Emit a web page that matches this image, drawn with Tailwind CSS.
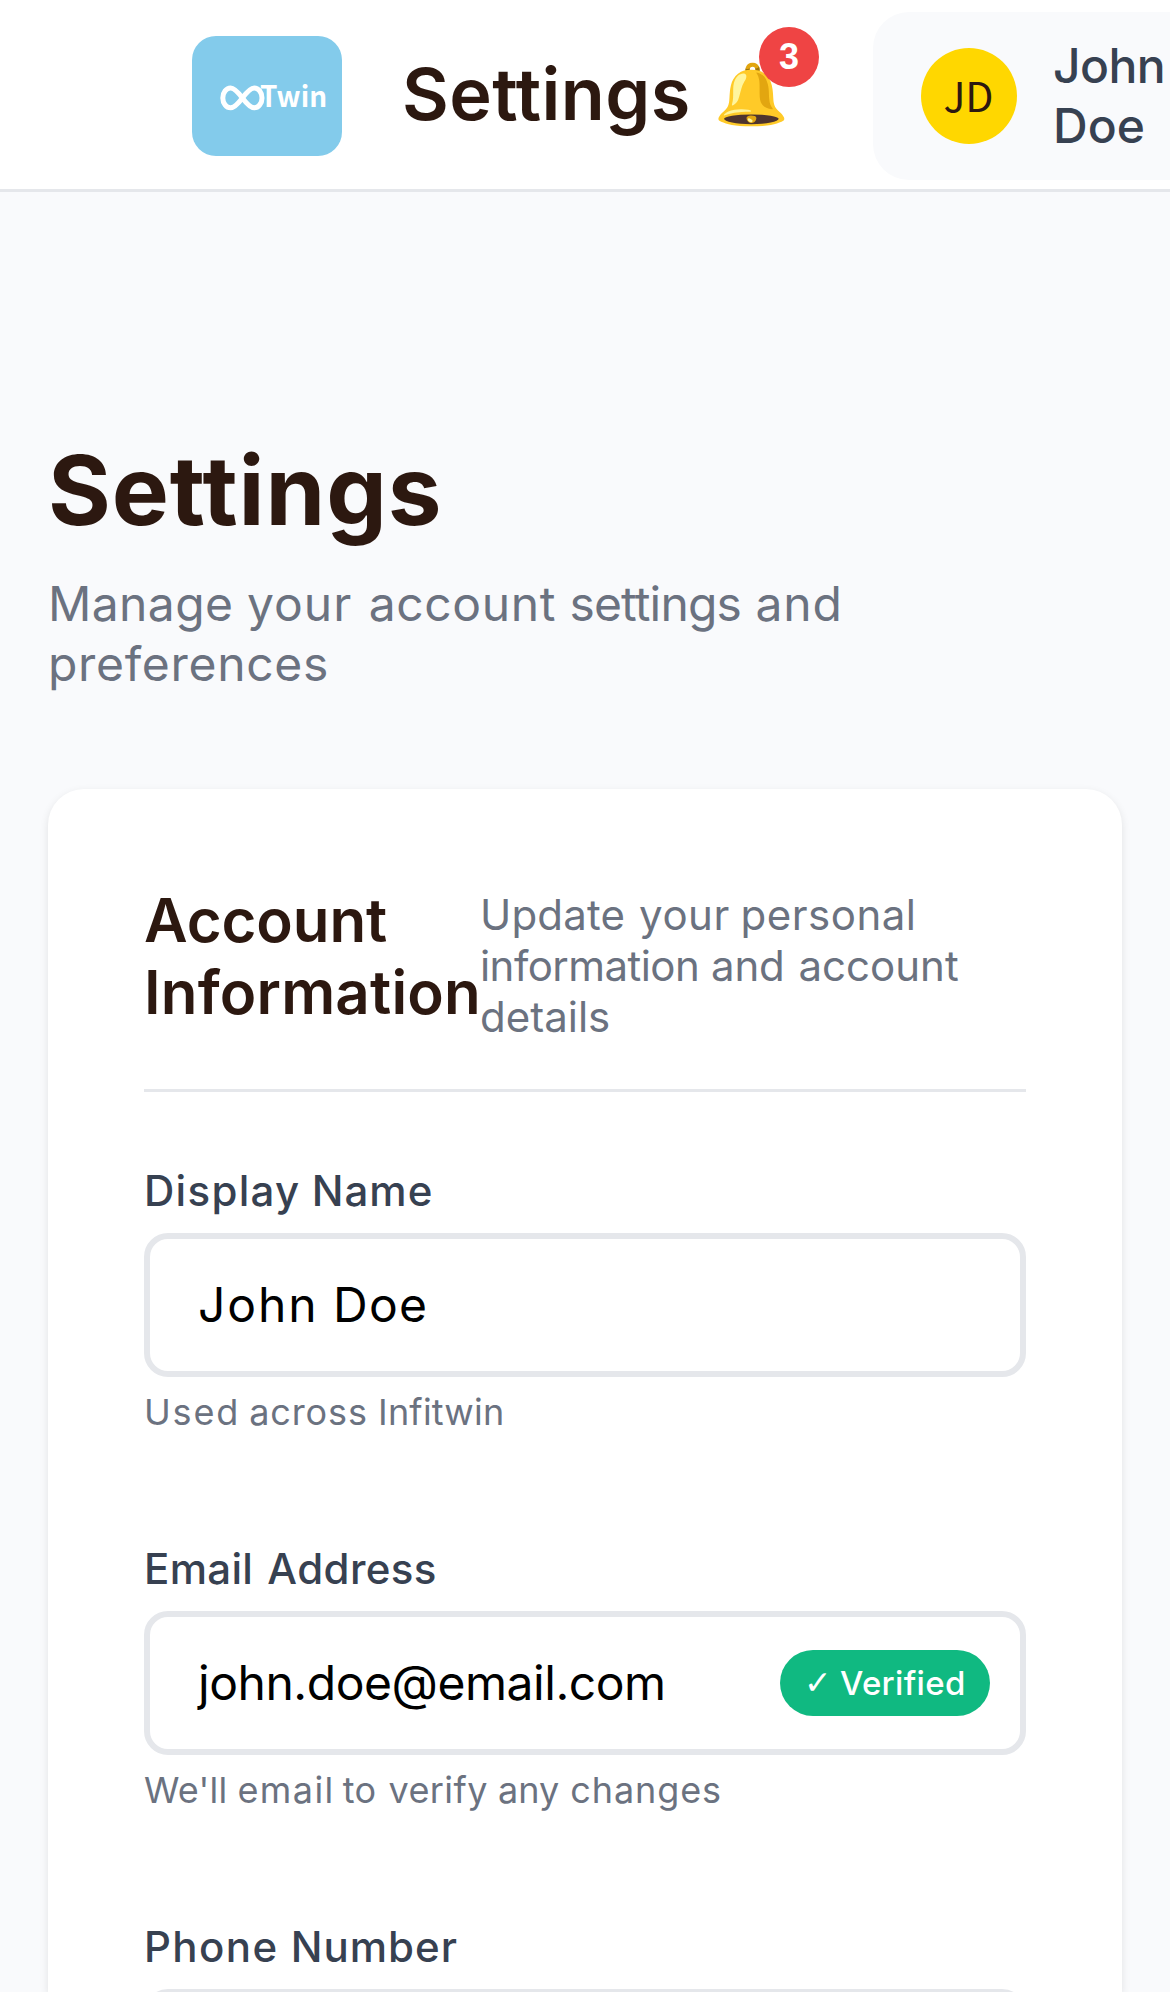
<!DOCTYPE html>
<html lang="en">
<head>
<meta charset="utf-8">
<title>Settings</title>
<script src="https://cdn.jsdelivr.net/npm/@tailwindcss/browser@4"></script>
</head>
<body class="flex h-[1992px] w-[1170px] flex-col overflow-hidden bg-[#f9fafc] font-['Inter',sans-serif] text-[48px] leading-[60px] text-[#2c1810]">
  <header class="flex h-48 shrink-0 items-center border-b-3 border-[#e5e7eb] bg-white pt-[3px] pl-48">
    <div class="h-[120px] w-[150px] shrink-0 rounded-3xl bg-[#83cbeb]">
      <svg class="block" width="150" height="120" viewBox="0 0 150 120" fill="none">
        <path d="M50.4 62C45.6 55.6 42.2 52 38.6 52A7.8 9.9 0 0 0 38.6 71.8C42.2 71.8 45.6 68.4 50.4 62C55.2 55.6 58.6 52 62.2 52A7.8 9.9 0 0 1 62.2 71.8C58.6 71.8 55.2 68.4 50.4 62Z" stroke="#fff" stroke-width="5"/>
        <text x="68" y="71" textLength="67" lengthAdjust="spacingAndGlyphs" fill="#fff" font-family="Noto Sans CJK SC, sans-serif" font-weight="700" font-size="29">Twin</text>
      </svg>
    </div>
    <h1 class="ml-[60px] w-[291px] shrink-0 pb-[5px] text-7xl font-semibold tracking-[0.4px]">Settings</h1>
    <button class="relative ml-[21px] h-[120px] w-[83px] shrink-0 pb-[6px] text-left text-[60px] leading-[113px]">🔔
      <span class="absolute top-[-9px] left-[45px] flex size-[60px] items-center justify-center rounded-full bg-[#ef4444] font-['Liberation_Sans',sans-serif] text-4xl font-bold text-white">3</span>
    </button>
    <div class="ml-[76px] flex h-[168px] min-w-0 flex-1 items-center gap-9 rounded-l-[36px] bg-[#f9fafc] pl-12">
      <div class="flex size-24 shrink-0 items-center justify-center rounded-full bg-[#ffd700] pr-px pb-[5px] font-['Noto_Sans_CJK_SC',sans-serif] text-[41px]">JD</div>
      <div class="font-medium text-[#374151]"><span class="tracking-[-0.6px]">John</span><br><span>Doe</span></div>
    </div>
  </header>

  <main class="flex min-h-0 flex-1 flex-col px-12 pt-[238px]">
    <h2 class="text-8xl leading-[120px] font-bold tracking-[0.9px]">Settings</h2>
    <p class="mt-6 w-[900px] text-[#6b7280]"><span class="tracking-[0.4px]">Manage</span> <span class="tracking-[1px]">your</span> <span class="ml-[3px] tracking-[0.6px]">account</span> <span class="tracking-[-0.85px]">settings</span> <span class="ml-px tracking-[0.8px]">and</span><br><span class="tracking-[0.7px]">preferences</span></p>

    <section class="mt-[95px] min-h-0 flex-1 rounded-t-[36px] bg-white px-24 pt-24 shadow-[0_3px_9px_rgba(0,0,0,0.1)]">
      <div class="flex h-[207px] border-b-3 border-[#e5e7eb]">
        <h3 class="-mt-px w-[336px] shrink-0 text-6xl leading-[72px] font-semibold"><span class="tracking-[-0.1px]">Account</span> <span class="tracking-[0.2px]">Information</span></h3>
        <p class="pt-1 text-[42px] leading-[51px] whitespace-nowrap text-[#6b7280]"><span class="tracking-[0.2px]">Update</span> <span class="ml-[2px] tracking-[0.5px]">your</span> <span class="-ml-px tracking-[0.5px]">personal</span><br><span class="tracking-[-0.55px]">information</span> <span class="tracking-[-0.15px]">and</span> <span class="ml-[2px]">account</span><br>details</p>
      </div>

      <div class="mt-[73px] h-[378px]">
        <label class="block text-[42px] leading-[51px] font-medium text-[#374151]"><span class="tracking-[1.3px]">Display</span> <span class="tracking-[1px]">Name</span></label>
        <div class="mt-[17px] flex h-36 items-center rounded-3xl border-6 border-[#e5e7eb] bg-white px-12 text-black">
          <p><span class="tracking-[1.9px]">John</span> <span class="ml-px tracking-[1.3px]">Doe</span></p>
        </div>
        <p class="mt-[13px] text-4xl leading-[45px] text-[#6b7280]"><span class="tracking-[1.8px]">Used</span> <span class="-ml-px tracking-[0.9px]">across</span> <span class="tracking-[0.2px]">Infitwin</span></p>
      </div>

      <div class="h-[378px]">
        <label class="block text-[42px] leading-[51px] font-medium text-[#374151]"><span class="tracking-[0.3px]">Email</span> <span class="ml-[3px] tracking-[0.4px]">Address</span></label>
        <div class="mt-[17px] flex h-36 items-center justify-between rounded-3xl border-6 border-[#e5e7eb] bg-white pr-[30px] pl-12 text-black">
          <span class="tracking-[-0.45px]">john.doe@email.com</span>
          <span class="flex h-[66px] w-[210px] items-center gap-[9px] rounded-full bg-[#10b981] pl-6 text-[33px] leading-[42px] font-medium whitespace-nowrap text-white"><span class="w-[27px] font-['DejaVu_Sans'] font-normal">✓</span><span class="tracking-[0.3px]">Verified</span></span>
        </div>
        <p class="mt-[13px] text-4xl leading-[45px] whitespace-nowrap text-[#6b7280]"><span class="tracking-[0.2px]">We'll</span> <span class="tracking-[1.4px]">email</span> <span class="-ml-[2px] tracking-[0.3px]">to</span> <span class="ml-[2px] tracking-[0.4px]">verify</span> <span>any</span> <span class="ml-px tracking-[0.9px]">changes</span></p>
      </div>

      <div>
        <label class="block text-[42px] leading-[51px] font-medium text-[#374151]"><span class="tracking-[1.4px]">Phone</span> <span class="ml-px tracking-[1px]">Number</span></label>
        <div class="mt-[17px] h-36 rounded-3xl border-6 border-[#e5e7eb] bg-white"></div>
      </div>
    </section>
  </main>
</body>
</html>
